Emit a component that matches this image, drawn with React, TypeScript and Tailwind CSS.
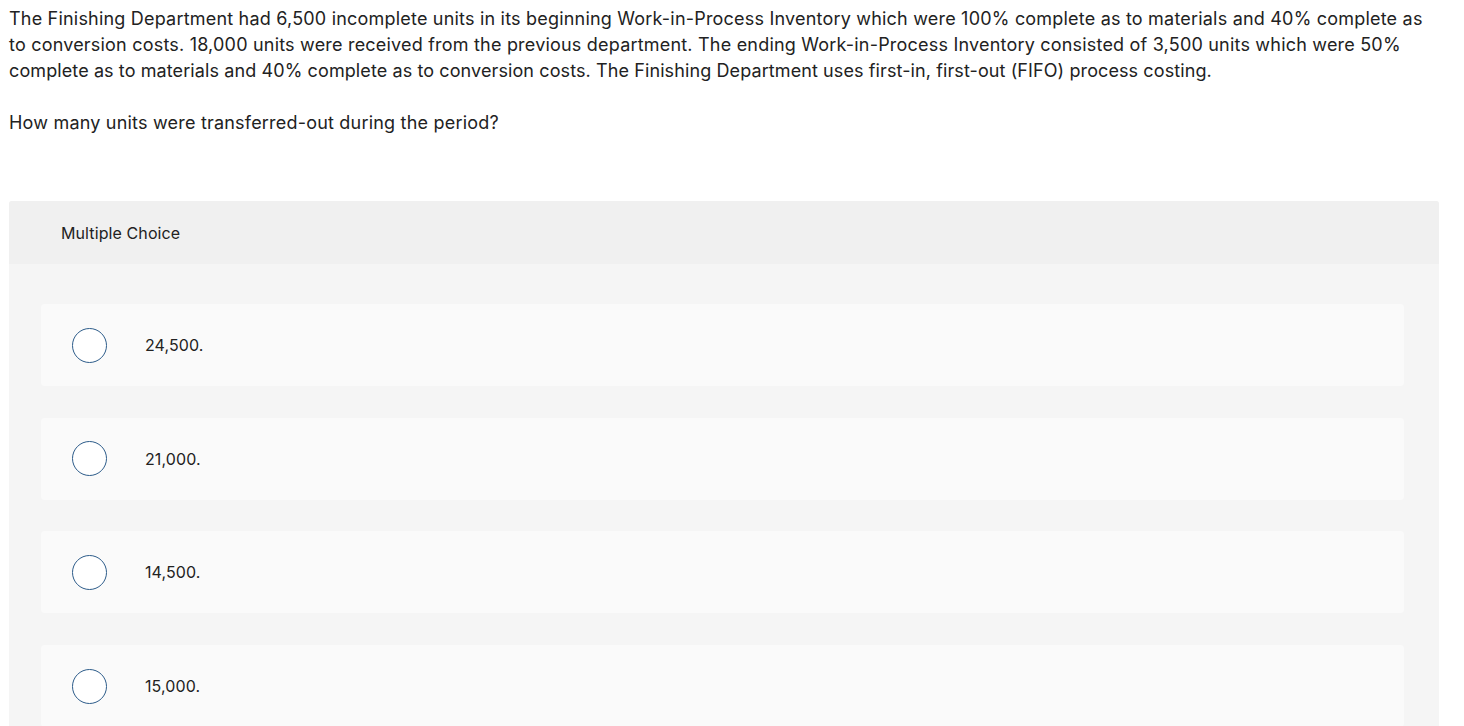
import React from "react";

const options = ["24,500.", "21,000.", "14,500.", "15,000."];

export default function App() {
  return (
    <div className="min-h-[726px] bg-white pl-[9px] pt-[6px] font-['Inter',sans-serif] text-[#222222]">
      <div className="text-[18px] leading-[26px] tracking-[0.2px]">
        <div className="whitespace-nowrap">The Finishing Department had 6,500 incomplete units in its beginning Work-in-Process Inventory which were 100% complete as to materials and 40% complete as</div>
        <div className="whitespace-nowrap">to conversion costs. 18,000 units were received from the previous department. The ending Work-in-Process Inventory consisted of 3,500 units which were 50%</div>
        <div className="whitespace-nowrap tracking-[0.1px]">complete as to materials and 40% complete as to conversion costs. The Finishing Department uses first-in, first-out (FIFO) process costing.</div>
        <div className="mt-[26px] whitespace-nowrap">How many units were transferred-out during the period?</div>
      </div>
      <div className="mt-[65px] w-[1430px] rounded-t-[3px] bg-[#f5f5f5]">
        <div className="flex h-[63px] items-center rounded-t-[3px] bg-[#f0f0f0] pl-[52px] text-[16px] tracking-[0.1px]">Multiple Choice</div>
        <div className="flex flex-col gap-[31.7px] pl-[32px] pr-[35px] pt-[40px] pb-[20px]">
          {options.map((o) => (
            <div key={o} className="flex h-[82px] items-center rounded-[4px] bg-[#fafafa]">
              <div className="ml-[31px] h-[35px] w-[35px] shrink-0 rounded-full border-[1.5px] border-[#2d5c8a] bg-white" />
              <div className="ml-[38px] text-[16px] tracking-[0.1px]">{o}</div>
            </div>
          ))}
        </div>
      </div>
    </div>
  );
}
